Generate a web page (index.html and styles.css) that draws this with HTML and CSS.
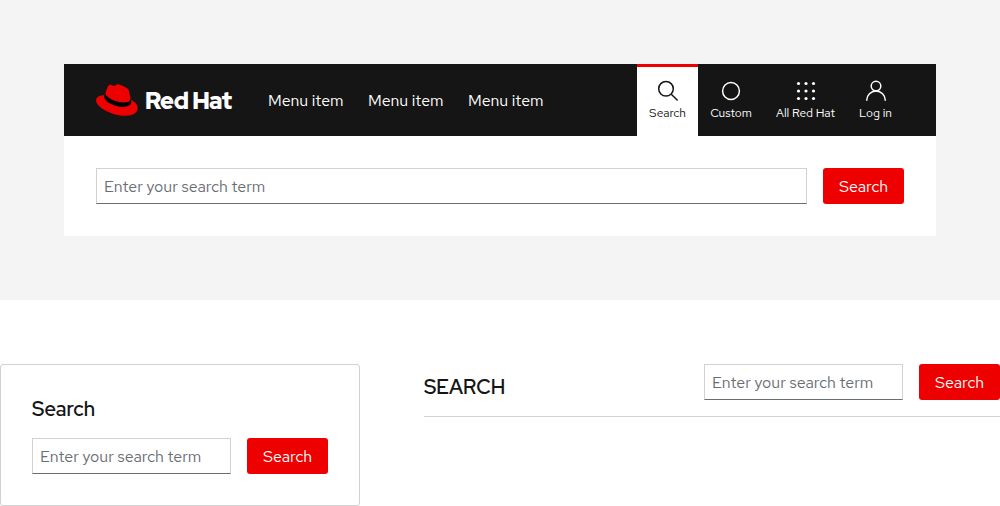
FILE: index.html
```html
<!DOCTYPE html>
<html lang="en">
<head>
<meta charset="utf-8">
<title>Search</title>
<link rel="stylesheet" href="styles.css">
</head>
<body>
<section class="stage">
  <header class="masthead">
    <a class="brand">
      <svg class="hat" viewBox="0 0 192 145">
        <path fill="#000" d="M157.77 62.61a14 14 0 0 1 .31 3.42c0 14.88-18.1 17.46-30.61 17.46C78.83 83.49 42.53 53.26 42.53 44a6.43 6.43 0 0 1 .22-1.94l-3.66 9.06a18.45 18.45 0 0 0-1.51 7.33c0 18.11 41 45.48 87.74 45.48 20.69 0 36.43-7.76 36.43-21.77 0-1.08 0-1.94-1.73-10.13Z"/>
        <path fill="#e00" d="M127.47 83.49c12.51 0 30.61-2.58 30.61-17.46a14 14 0 0 0-.31-3.42l-7.45-32.36c-1.72-7.12-3.23-10.35-15.73-16.6C124.89 8.69 103.76.5 97.51.5 91.69.5 90 8 83.06 8c-6.68 0-11.64-5.6-17.89-5.6-6 0-9.91 4.09-12.93 12.5 0 0-8.41 23.72-9.49 27.16A6.43 6.43 0 0 0 42.53 44c0 9.22 36.3 39.45 84.94 39.45M160 72.07c1.73 8.19 1.73 9.05 1.73 10.13 0 14-15.74 21.77-36.43 21.77C78.54 104 37.58 76.6 37.58 58.49a18.45 18.45 0 0 1 1.51-7.33C22.27 52 .5 55 .5 74.22c0 31.48 74.59 70.28 133.65 70.28 45.28 0 56.7-20.48 56.7-36.65 0-12.72-11-27.16-30.83-35.78"/>
      </svg>
      <span class="brand-name">Red Hat</span>
    </a>
    <nav class="menu"><a>Menu item</a><a>Menu item</a><a>Menu item</a></nav>
    <div class="tools">
      <a class="tool tool-search active">
        <svg class="icon" viewBox="0 0 24 24"><circle cx="10" cy="9.8" r="7.3"/><path d="M15.3 15.2l6.3 6.3"/></svg>
        <span>Search</span>
      </a>
      <a class="tool tool-custom">
        <svg class="icon" viewBox="0 0 24 24"><circle cx="12" cy="12" r="8.4"/></svg>
        <span>Custom</span>
      </a>
      <a class="tool tool-all">
        <svg class="icon dots" viewBox="0 0 24 24"><circle cx="4.5" cy="4.5" r="1.6"/><circle cx="12" cy="4.5" r="1.6"/><circle cx="19.5" cy="4.5" r="1.6"/><circle cx="4.5" cy="12" r="1.6"/><circle cx="12" cy="12" r="1.6"/><circle cx="19.5" cy="12" r="1.6"/><circle cx="4.5" cy="19.5" r="1.6"/><circle cx="12" cy="19.5" r="1.6"/><circle cx="19.5" cy="19.5" r="1.6"/></svg>
        <span>All Red Hat</span>
      </a>
      <a class="tool tool-login">
        <svg class="icon" viewBox="0 0 24 24"><circle cx="12" cy="7.1" r="4.8"/><path d="M2.7 21.7v-.4a9.3 9.3 0 0 1 18.6 0v.4"/></svg>
        <span>Log in</span>
      </a>
    </div>
  </header>
  <form class="search-bar panel">
    <input class="field" type="text" placeholder="Enter your search term">
    <button class="button" type="button">Search</button>
  </form>
</section>
<main class="examples">
  <section class="card">
    <h2 class="title">Search</h2>
    <form class="search-bar">
      <input class="field" type="text" placeholder="Enter your search term">
      <button class="button" type="button">Search</button>
    </form>
  </section>
  <section class="heading-row">
    <h2 class="title title-caps">SEARCH</h2>
    <form class="search-bar">
      <input class="field" type="text" placeholder="Enter your search term">
      <button class="button" type="button">Search</button>
    </form>
  </section>
</main>
</body>
</html>
```
FILE: styles.css
```css
* { box-sizing: border-box; }
body {
  margin: 0;
  background: #fff;
  color: #151515;
  font: 400 16px/24px "Red Hat Text", Inter, sans-serif;
  letter-spacing: -0.04px;
}
.stage { height: 300px; padding: 64px; background: #f4f4f4; }
.masthead {
  display: flex;
  height: 72px;
  padding: 0 32px;
  background: #151515;
  color: #fff;
}
.brand { display: flex; align-items: center; width: 172px; gap: 7px; }
.hat { width: 42px; height: 32px; }
.brand-name {
  padding-top: 1px;
  font: 900 23.5px/30px "Red Hat Display", Inter, sans-serif;
  letter-spacing: -0.5px;
  word-spacing: -0.3px;
  white-space: nowrap;
}
.menu { display: flex; gap: 25px; align-items: center; white-space: nowrap; }
.menu a { width: 75px; padding-top: 1px; }
.tools { display: flex; height: 72px; margin-left: auto; }
.tool {
  display: flex;
  flex-direction: column;
  align-items: center;
  padding-top: 15px;
  font-size: 12px;
  line-height: 18px;
  white-space: nowrap;
}
.tool span { margin-top: 1px; }
.tool-search { width: 61px; }
.tool-custom { width: 66px; }
.tool-all { width: 83px; }
.tool-login { width: 57px; }
.active { background: #fff; color: #151515; box-shadow: inset 0 3px #e00; }
.icon { width: 24px; height: 24px; fill: none; stroke: currentColor; stroke-width: 1.5; }
.dots { fill: currentColor; stroke: none; }
.search-bar { display: flex; gap: 16px; margin: 0; }
.panel { height: 100px; padding: 32px; background: #fff; }
.field {
  flex: 1;
  min-width: 0;
  height: 36px;
  padding: 1px 7px 0;
  border: 1px solid #d2d2d2;
  border-bottom-color: #6a6e73;
  border-radius: 0;
  background: #fff;
  font: inherit;
  letter-spacing: inherit;
}
.field::placeholder { color: #6a6e73; opacity: 1; }
.button {
  width: 81px;
  height: 36px;
  padding: 2px 0 0;
  border: 0;
  border-radius: 3px;
  background: #e00;
  color: #fff;
  font: inherit;
  letter-spacing: inherit;
}
.examples {
  display: grid;
  grid-template-columns: 360px 576px;
  gap: 64px;
  align-items: start;
  padding-top: 64px;
}
.card { height: 142px; padding: 29px 31px; border: 1px solid #d2d2d2; border-radius: 3px; }
.title {
  margin: 0 0 14px;
  font: 600 20px/30px "Red Hat Display", Inter, sans-serif;
  letter-spacing: 0;
}
.heading-row { display: flex; justify-content: space-between; height: 53px; border-bottom: 1px solid #d2d2d2; }
.heading-row .search-bar { width: 296px; }
.title-caps { margin-top: 8px; }
```
